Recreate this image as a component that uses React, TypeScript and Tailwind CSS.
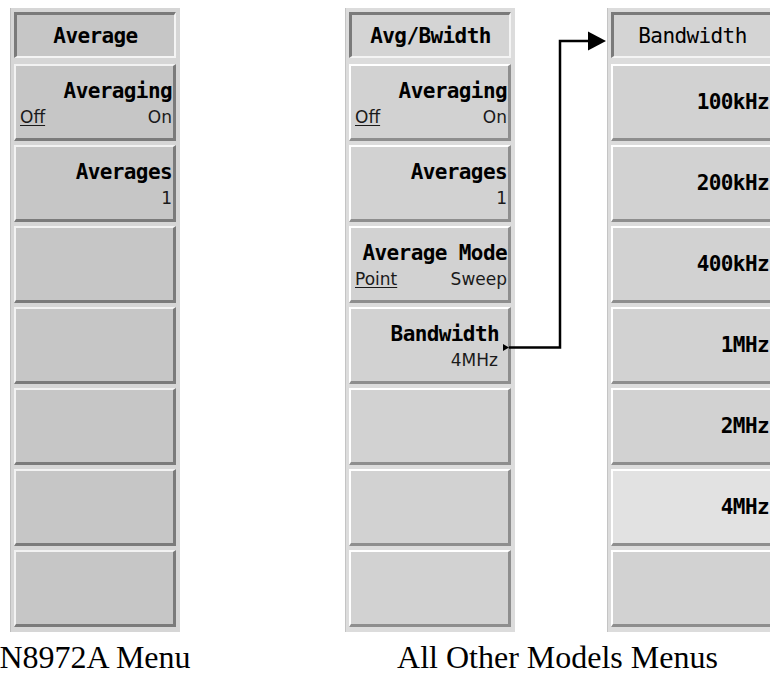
import React from "react";

type Theme = "flat" | "tex";

const boldFont =
  "font-['DejaVu_Sans_Mono',monospace] font-bold text-[21px] leading-[20px] tracking-[-0.6px] text-black";
const subFont =
  "font-['DejaVu_Sans',sans-serif] text-[17px] leading-[17px] text-[#1a1a1a]";

function btnClass(theme: Theme, highlight?: boolean) {
  if (theme === "flat") {
    return "h-[77px] bg-[#c6c6c6] border-t-2 border-l-2 border-t-[#f2f2f2] border-l-[#f2f2f2] border-r-[3px] border-b-[3px] border-r-[#7b7b7b] border-b-[#7b7b7b]";
  }
  return (
    "h-[77px] border-t-2 border-l-2 border-t-white border-l-white border-r-[3px] border-b-[3px] border-r-[#8e8e8e] border-b-[#8e8e8e] " +
    (highlight ? "bg-[#e2e2e2]" : "bg-[#d2d2d2]")
  );
}

function Header({ theme, text, bold }: { theme: Theme; text: string; bold?: boolean }) {
  return (
    <div
      className={
        "h-[46px] flex items-center justify-center border-t-[3px] border-l-[3px] border-t-[#7a7a7a] border-l-[#7a7a7a] border-b-2 border-r-2 border-b-[#f4f4f4] border-r-[#f4f4f4] " +
        (theme === "flat" ? "bg-[#c6c6c6]" : "bg-[#d4d4d4]")
      }
    >
      <span
        className={
          "font-['DejaVu_Sans_Mono',monospace] text-[21px] leading-[20px] tracking-[-0.6px] text-black " +
          (bold ? "font-bold" : "font-normal")
        }
      >
        {text}
      </span>
    </div>
  );
}

function LabelBtn({
  theme,
  label,
  left,
  right,
  arrow,
}: {
  theme: Theme;
  label: string;
  left?: string;
  right?: string;
  arrow?: boolean;
}) {
  return (
    <div className={btnClass(theme)}>
      <div className={"pt-[15px] text-right whitespace-nowrap " + boldFont + (arrow ? " pr-[9px]" : " pr-[1px]")}>
        {label}
      </div>
      <div className={"mt-[8px] flex justify-between " + subFont + (arrow ? " pl-[4px] pr-[10px]" : " pl-[4px] pr-[1px]")}>
        <span className="underline underline-offset-2">{left ?? ""}</span>
        <span>{right ?? ""}</span>
      </div>
    </div>
  );
}

function ValueBtn({ value, highlight }: { value: string; highlight?: boolean }) {
  return (
    <div className={btnClass("tex", highlight) + " flex items-center justify-end pr-[1px]"}>
      <span className={boldFont + " whitespace-nowrap"}>{value}</span>
    </div>
  );
}

function EmptyBtn({ theme }: { theme: Theme }) {
  return <div className={btnClass(theme)} />;
}

function Panel({ theme, children }: { theme: Theme; children: React.ReactNode }) {
  return (
    <div
      className={
        "w-[170px] shrink-0 h-[624px] pt-[4px] pl-[3px] pr-[4px] pb-[4px] flex flex-col " +
        (theme === "flat"
          ? "bg-[#d6d6d6] border-l border-l-[#bdbdbd]"
          : "bg-[#dcdcdc] border-l border-l-[#c4c4c4]")
      }
    >
      {children}
    </div>
  );
}

export default function App() {
  return (
    <div className="relative w-[770px] h-[675px] overflow-hidden bg-white">
      <div className="flex items-start pt-[8px] pl-[10px]">
        {/* Left panel */}
        <Panel theme="flat">
          <Header theme="flat" text="Average" bold />
          <div className="mt-[6px] flex flex-col gap-[4px]">
            <LabelBtn theme="flat" label="Averaging" left="Off" right="On" />
            <LabelBtn theme="flat" label="Averages" right="1" />
            <EmptyBtn theme="flat" />
            <EmptyBtn theme="flat" />
            <EmptyBtn theme="flat" />
            <EmptyBtn theme="flat" />
            <EmptyBtn theme="flat" />
          </div>
        </Panel>

        {/* Middle panel */}
        <div className="ml-[165px]">
          <Panel theme="tex">
            <Header theme="tex" text="Avg/Bwidth" bold />
            <div className="mt-[6px] flex flex-col gap-[4px]">
              <LabelBtn theme="tex" label="Averaging" left="Off" right="On" />
              <LabelBtn theme="tex" label="Averages" right="1" />
              <LabelBtn theme="tex" label="Average Mode" left="Point" right="Sweep" />
              <LabelBtn theme="tex" label="Bandwidth" right="4MHz" arrow />
              <EmptyBtn theme="tex" />
              <EmptyBtn theme="tex" />
              <EmptyBtn theme="tex" />
            </div>
          </Panel>
        </div>

        {/* Right panel */}
        <div className="ml-[92px]">
          <Panel theme="tex">
            <Header theme="tex" text="Bandwidth" />
            <div className="mt-[6px] flex flex-col gap-[4px]">
              <ValueBtn value="100kHz" />
              <ValueBtn value="200kHz" />
              <ValueBtn value="400kHz" />
              <ValueBtn value="1MHz" />
              <ValueBtn value="2MHz" />
              <ValueBtn value="4MHz" highlight />
              <EmptyBtn theme="tex" />
            </div>
          </Panel>
        </div>
      </div>

      {/* Captions */}
      <div className="flex pl-[10px] mt-[9px] font-['Liberation_Serif',serif] text-[32px] leading-[32px] text-black">
        <div className="w-[170px] flex justify-center whitespace-nowrap">N8972A Menu</div>
        <div className="ml-[165px] w-[432px] flex justify-center whitespace-nowrap">
          All Other Models Menus
        </div>
      </div>

      {/* Connector arrow overlay */}
      <svg
        className="absolute left-0 top-0 pointer-events-none"
        width="770"
        height="675"
        viewBox="0 0 770 675"
      >
        <polygon points="503,344 509,347.5 503,351" fill="#000" />
        <path d="M509 347.5 H560 V41 H592" fill="none" stroke="#000" strokeWidth="2.5" />
        <polygon points="588,31.5 606,41 588,50.5" fill="#000" />
      </svg>
    </div>
  );
}
